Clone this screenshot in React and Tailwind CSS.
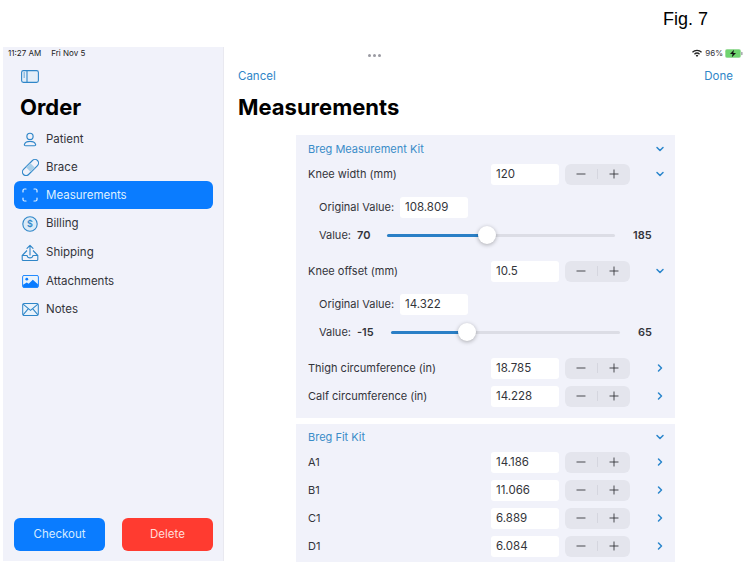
import { Minus, Plus, ChevronDown, ChevronRight } from "lucide-react";

const navItems = [
  { label: "Patient", icon: PatientIcon, row: "h-[28px]" },
  { label: "Brace", icon: BraceIcon, row: "h-[28px]" },
  { label: "Measurements", icon: ScanIcon, row: "h-[28px]", active: true },
  { label: "Billing", icon: BillingIcon, row: "h-[29px]" },
  { label: "Shipping", icon: ShippingIcon, row: "h-[29px]" },
  { label: "Attachments", icon: PhotoIcon, row: "h-[28px]" },
  { label: "Notes", icon: MailIcon, row: "h-[28px]" },
];

function PatientIcon() {
  return (
    <svg width="14" height="15" viewBox="0 0 18 19" fill="none" stroke="#2f86c8" strokeWidth="1.500">
      <circle cx="9" cy="5.500" r="4" />
      <path d="M3.400 17.500c-1.400 0-2-.9-1.500-2C3 13 5.800 12 9 12s6 1 7.100 3.500c.5 1.100-.1 2-1.500 2z" />
    </svg>
  );
}

function BraceIcon() {
  return (
    <svg width="17" height="17" viewBox="0 0 18 18" fill="none" stroke="#2f86c8" strokeWidth="1.200">
      <rect x="-1.500" y="5.200" width="21" height="7.600" rx="3.800" transform="rotate(-45 9 9)" />
      <rect x="5.800" y="5.500" width="6.400" height="7" fill="#a9cfe9" stroke="none" transform="rotate(-45 9 9)" />
    </svg>
  );
}

function ScanIcon() {
  return (
    <svg width="16" height="14" viewBox="0 0 16 14" fill="none" stroke="#dff0ff" strokeWidth="1.200" strokeLinecap="round">
      <path d="M1 4V2.500A1.500 1.500 0 0 1 2.500 1H4M12 1h1.500A1.500 1.500 0 0 1 15 2.500V4M15 10v1.500a1.500 1.500 0 0 1-1.500 1.500H12M4 13H2.500A1.500 1.500 0 0 1 1 11.500V10" />
    </svg>
  );
}

function BillingIcon() {
  return (
    <svg width="16" height="16" viewBox="0 0 16 16">
      <circle cx="8" cy="8" r="7.200" fill="#dcebf7" stroke="#2f86c8" strokeWidth="1.100" />
      <text x="8" y="11" textAnchor="middle" fontSize="9" fontWeight="600" fill="#2f86c8" fontFamily="Inter, sans-serif">$</text>
    </svg>
  );
}

function ShippingIcon() {
  return (
    <svg width="18" height="18" viewBox="0 0 18 18" fill="none" stroke="#2f86c8" strokeWidth="1.100">
      <path d="M6 6.500 1.200 11.500V15.500a1 1 0 0 0 1 1h13.600a1 1 0 0 0 1-1V11.500L12 6.500" />
      <path d="M1.200 11.500H6c.3 1.500 1.400 2.400 3 2.400s2.700-.9 3-2.400h4.800" />
      <path d="M9 11V1.500M6 4.300 9 1.300l3 3" strokeLinecap="round" strokeLinejoin="round" />
    </svg>
  );
}

function PhotoIcon() {
  return (
    <svg width="17" height="13" viewBox="0 0 18 14">
      <rect x="0.500" y="0.500" width="17" height="13" rx="1.500" fill="#eaf3fb" stroke="#0a7cff" />
      <circle cx="5" cy="4.500" r="1.500" fill="#0a7cff" />
      <path d="M1 13v-2.500L5 8l2 1.500L11.500 5 17 10v3z" fill="#0a7cff" />
    </svg>
  );
}

function MailIcon() {
  return (
    <svg width="17" height="13" viewBox="0 0 18 14" fill="#eaf3fb" stroke="#2f86c8" strokeWidth="1.100">
      <rect x="0.600" y="0.600" width="16.800" height="12.800" rx="1.500" />
      <path d="M1 1.200 9 8l8-6.800M1 12.800l5.500-6.500M17 12.800l-5.500-6.500" fill="none" />
    </svg>
  );
}

function SidebarToggle() {
  return (
    <svg width="18" height="13" viewBox="0 0 18 13" fill="none" stroke="#2f86c8" strokeWidth="1.100">
      <rect x="0.600" y="0.600" width="16.800" height="11.800" rx="1.800" fill="#e4eef8" />
      <path d="M6 .6v11.800" />
      <path d="M2.500 3h1.500M2.500 5h1.500M2.500 7h1.500" strokeWidth="0.900" />
    </svg>
  );
}

function Stepper() {
  return (
    <div className="flex items-center w-[65px] h-[21px] ml-[6px] bg-[#e4e5ed] rounded-md text-[#26272c]">
      <div className="flex-1 flex justify-center">
        <Minus size={14} strokeWidth={1.4} />
      </div>
      <div className="w-px h-[10px] bg-[#d5d6df]" />
      <div className="flex-1 flex justify-center">
        <Plus size={14} strokeWidth={1.4} />
      </div>
    </div>
  );
}

function ValueBox({ value, className = "" }) {
  return (
    <div className={`w-[68px] h-[21px] pl-[5px] pt-[2px] flex items-center bg-white rounded-[3px] text-[11.500px] text-[#33343a] ${className}`}>
      {value}
    </div>
  );
}

function MeasureRow({ label, value, open }) {
  const Chevron = open ? ChevronDown : ChevronRight;
  return (
    <div className="flex items-center h-[28px]">
      <div className="flex-1 text-[11px] text-[#33343a]">{label}</div>
      <ValueBox value={value} />
      <Stepper />
      <div className="w-[12px] ml-[24px] flex justify-center text-[#2a86cc]">
        <Chevron size={14} strokeWidth={3} />
      </div>
    </div>
  );
}

function OriginalRow({ value }) {
  return (
    <div className="flex items-center h-[28px] mt-[5px] pl-[11px]">
      <div className="w-[81px] text-[11px] text-[#33343a]">Original Value:</div>
      <ValueBox value={value} />
    </div>
  );
}

function SliderRow({ value, max, percent, labelWidth, trackWidth }) {
  return (
    <div className="flex items-center h-[28px] pl-[11px]">
      <div className={`flex ${labelWidth} text-[11px] text-[#33343a]`}>
        <span>Value:</span>
        <span className="ml-[6px] font-semibold">{value}</span>
      </div>
      <div className={`relative h-[3px] ${trackWidth} bg-[#dcdde5] rounded-full`}>
        <div className="h-full bg-[#2a7fc6] rounded-full" style={{ width: `${percent}%` }} />
        <div
          className="absolute top-1/2 w-[18px] h-[18px] -ml-[9px] -mt-[9px] bg-white rounded-full shadow-[0_1px_4px_rgba(0,0,0,0.3)]"
          style={{ left: `${percent}%` }}
        />
      </div>
      <div className="ml-[18px] text-[11px] font-semibold text-[#33343a]">{max}</div>
    </div>
  );
}

function KitHeader({ title, className }) {
  return (
    <div className={`flex items-center justify-between ${className}`}>
      <div className="text-[11px] text-[#3a8cc8]">{title}</div>
      <div className="w-[12px] flex justify-center text-[#2a86cc]">
        <ChevronDown size={14} strokeWidth={3} />
      </div>
    </div>
  );
}

export default function App() {
  return (
    <div className="w-[750px] h-[562px] overflow-hidden bg-white font-['Inter',sans-serif]">
      <div className="flex justify-end h-[47px] pt-[8px] pr-[42px] leading-[22px] font-['Liberation_Sans',sans-serif] text-[18px] text-black">
        Fig. 7
      </div>

      <div className="flex h-[515px]">
        {/* Sidebar */}
        <div className="flex flex-col w-[221px] h-[514px] ml-[3px] bg-[#f1f2fa] border-r border-[#e9e9f0]">
          <div className="h-[12px] pl-[5px] flex items-center text-[8px] text-[#222]">
            <span>11:27 AM</span>
            <span className="ml-[10px]">Fri Nov 5</span>
          </div>
          <div className="ml-[18px] mt-[11px]">
            <SidebarToggle />
          </div>
          <div className="ml-[17px] mt-[10px] text-[22px] leading-[28px] font-bold text-black">Order</div>
          <div className="mt-[4px] pl-[11px] pr-[10px]">
            {navItems.map((item) => (
              <div
                key={item.label}
                className={`flex items-center ${item.row} rounded-md ${item.active ? "bg-[#0a7cff] text-[#dff0ff]" : "text-[#33343a]"}`}
              >
                <div className="w-[32px] flex justify-center shrink-0">
                  <item.icon />
                </div>
                <span className="pt-[1px] text-[11.500px]">{item.label}</span>
              </div>
            ))}
          </div>
          <div className="flex justify-between mt-auto mb-[10px] pl-[11px] pr-[10px]">
            <div className="flex items-center justify-center w-[91px] h-[33px] bg-[#0a7cff] rounded-md text-[11.500px] text-[#d5ebff]">
              Checkout
            </div>
            <div className="flex items-center justify-center w-[91px] h-[33px] bg-[#ff3b30] rounded-md text-[11.500px] text-[#ffdcd9]">
              Delete
            </div>
          </div>
        </div>

        {/* Main */}
        <div className="flex-1 min-w-0">
          <div className="relative flex justify-end h-[12px] pr-[7px] items-center text-[8px] text-[#33343a]">
            <div className="absolute left-[144px] top-[7px] flex gap-[2px]">
              <span className="w-[3px] h-[3px] rounded-full bg-[#9a9aa2]" />
              <span className="w-[3px] h-[3px] rounded-full bg-[#9a9aa2]" />
              <span className="w-[3px] h-[3px] rounded-full bg-[#9a9aa2]" />
            </div>
            <svg width="10" height="8" viewBox="0 0 10 8" className="mr-[3px]">
              <path d="M0 2.800a7 7 0 0 1 10 0l-.9 1a5.700 5.700 0 0 0-8.200 0z" fill="#222" />
              <path d="M2 4.800a4.300 4.300 0 0 1 6 0l-.9 1a3 3 0 0 0-4.200 0z" fill="#222" />
              <path d="M3.700 6.500a1.800 1.800 0 0 1 2.600 0L5 8z" fill="#222" />
            </svg>
            <span className="mr-[2px]">96%</span>
            <svg width="18" height="9" viewBox="0 0 18 9">
              <rect x="0.300" y="0.300" width="15.400" height="8.400" rx="2" fill="#6fd46f" stroke="#a9dcaa" strokeWidth="0.600" />
              <rect x="16.200" y="3" width="1.300" height="3" rx="0.500" fill="#9a9aa2" />
              <path d="M9 .8 5 5h2.600L6.800 8.200 11 4H8.300z" fill="#111" />
            </svg>
          </div>
          <div className="flex justify-between mt-[11px] pl-[14px] pr-[17px] text-[11.500px] text-[#2f86c8] leading-[12px]">
            <span>Cancel</span>
            <span>Done</span>
          </div>
          <div className="mt-[11px] pl-[14px] text-[22px] leading-[28px] font-bold text-black">Measurements</div>

          <div className="mt-[14px] ml-[72px] w-[379px] flex flex-col gap-[6px]">
            <div className="bg-[#f1f2fa] pl-[12px] pr-[9px] pb-[8px]">
              <KitHeader title="Breg Measurement Kit" className="h-[22px] mt-[3px]" />
              <MeasureRow label="Knee width (mm)" value="120" open />
              <OriginalRow value="108.809" />
              <SliderRow value="70" max="185" percent={44} labelWidth="w-[68px]" trackWidth="w-[228px]" />
              <div className="mt-[8px]">
                <MeasureRow label="Knee offset (mm)" value="10.5" open />
              </div>
              <OriginalRow value="14.322" />
              <SliderRow value="-15" max="65" percent={33} labelWidth="w-[72px]" trackWidth="w-[229px]" />
              <div className="mt-[8px]">
                <MeasureRow label="Thigh circumference (in)" value="18.785" />
              </div>
              <MeasureRow label="Calf circumference (in)" value="14.228" />
            </div>

            <div className="bg-[#f1f2fa] pl-[12px] pr-[9px] pb-[8px]">
              <KitHeader title="Breg Fit Kit" className="h-[22px] mt-[2px]" />
              <MeasureRow label="A1" value="14.186" />
              <MeasureRow label="B1" value="11.066" />
              <MeasureRow label="C1" value="6.889" />
              <MeasureRow label="D1" value="6.084" />
            </div>
          </div>
        </div>
      </div>
    </div>
  );
}
